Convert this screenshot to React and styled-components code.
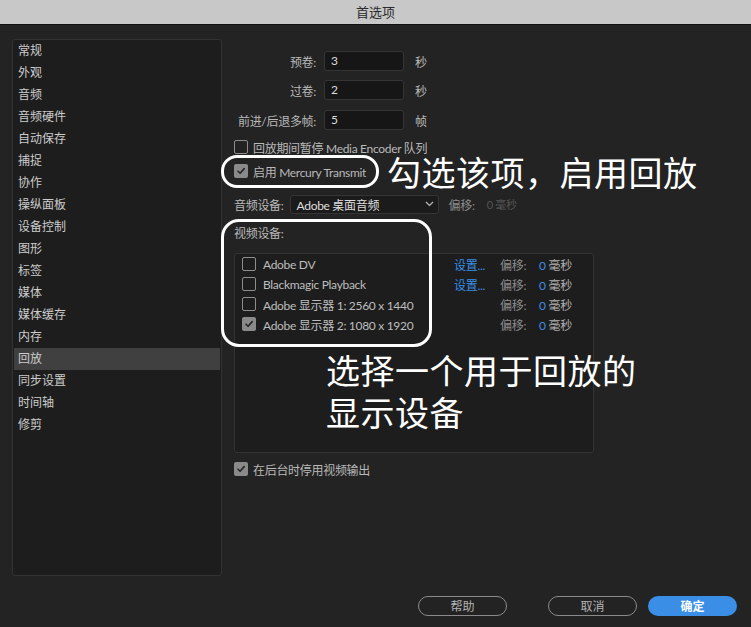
import React from "react";
import styled, { createGlobalStyle } from "styled-components";

const Global = createGlobalStyle`
  html, body { margin: 0; padding: 0; background: #232323; }
  body { font-family: "Lato", "Noto Sans CJK SC", sans-serif; font-size: 12px; }
  * { box-sizing: border-box; }
`;

const Window = styled.div`
  position: relative;
  width: 751px;
  height: 627px;
  background: #232323;
  display: flex;
  flex-direction: column;
  overflow: hidden;
`;

const TitleBar = styled.div`
  height: 25px;
  flex: none;
  background: #c8c8c8;
  border-bottom: 1px solid #111;
  display: flex;
  align-items: center;
  justify-content: center;
  color: #2b2b2b;
  font-family: "Noto Sans CJK SC", sans-serif;
  font-size: 13px;
  padding-bottom: 2px;
`;

const Body = styled.div`
  display: flex;
  padding: 14px 0 0 12px;
  height: 550px;
  flex: none;
`;

const Sidebar = styled.div`
  width: 210px;
  height: 537px;
  background: #1d1d1d;
  border: 1px solid #333;
  border-radius: 3px;
  padding: 0 1px;
`;

const NavItem = styled.div`
  height: 22px;
  line-height: 22px;
  padding-left: 4px;
  color: #cccccc;
  font-size: 12px;
  background: ${(p) => (p.$active ? "#404040" : "transparent")};
`;

const Content = styled.div`
  margin-left: 12px;
  padding-top: 12px;
  display: flex;
  flex-direction: column;
  width: 370px;
  letter-spacing: -0.3px;
`;

const FormRow = styled.div`
  display: flex;
  align-items: center;
  height: 20px;
  margin-top: ${(p) => p.$mt || 0}px;
`;

const Label = styled.div`
  width: 82px;
  text-align: right;
  color: #b9b9b9;
  margin-right: 8px;
  white-space: nowrap;
`;

const Input = styled.div`
  width: 80px;
  height: 20px;
  background: #161616;
  border: 1px solid #353535;
  border-radius: 3px;
  color: #dcdcdc;
  padding-left: 6px;
  line-height: 18px;
`;

const Unit = styled.div`
  margin-left: 11px;
  color: #b9b9b9;
`;

const CheckRow = styled.label`
  display: flex;
  align-items: center;
  height: 20px;
  margin-top: ${(p) => p.$mt || 0}px;
  color: #b9b9b9;
  white-space: nowrap;
`;

const Box = styled.span`
  width: 14px;
  height: 14px;
  flex: none;
  border-radius: 2px;
  border: ${(p) => (p.$on ? "none" : "1.5px solid #8d8d8d")};
  background: ${(p) => (p.$on ? "#8a8a8a" : "transparent")};
  margin-right: ${(p) => p.$gap || 5}px;
  display: flex;
  align-items: center;
  justify-content: center;
`;

const Check = ({ on, gap }) => (
  <Box $on={on} $gap={gap}>
    {on && (
      <svg width="10" height="10" viewBox="0 0 10 10">
        <path d="M2 5.2 L4.1 7.3 L8.2 2.6" fill="none" stroke="#262626" strokeWidth="1.6" strokeLinecap="round" strokeLinejoin="round" />
      </svg>
    )}
  </Box>
);

const AudioRow = styled.div`
  display: flex;
  align-items: center;
  height: 20px;
  margin-top: 13px;
`;

const Select = styled.div`
  width: 149px;
  height: 19px;
  margin-left: 6px;
  background: #1b1b1b;
  border: 1px solid #353535;
  border-radius: 3px;
  display: flex;
  align-items: center;
  justify-content: space-between;
  padding: 0 4px 0 6px;
  color: #dedede;
`;

const Dim = styled.span`
  color: ${(p) => p.$c || "#8c8c8c"};
  margin-left: ${(p) => p.$ml || 0}px;
  font-size: ${(p) => p.$fs || 12}px;
`;

const SectionLabel = styled.div`
  margin-top: 10px;
  height: 20px;
  line-height: 20px;
  color: #b9b9b9;
`;

const DeviceList = styled.div`
  margin-top: 9px;
  width: 360px;
  height: 200px;
  background: #1d1d1d;
  border: 1px solid #333;
  border-radius: 3px;
  padding: 0 0 0 7px;
`;

const DeviceRow = styled.div`
  display: grid;
  grid-template-columns: 212px 46px 39px auto;
  align-items: center;
  height: 20px;
  color: #bdbdbd;
  white-space: nowrap;
`;

const DeviceName = styled.div`
  display: flex;
  align-items: center;
`;

const Link = styled.span`
  color: #3a8ee6;
`;

const Footer = styled.div`
  display: flex;
  justify-content: flex-end;
  align-items: center;
  padding: 21px 14px 0 0;
`;

const Button = styled.button`
  width: 89px;
  height: 20px;
  border-radius: 10px;
  font-family: "Noto Sans CJK SC", sans-serif;
  font-size: 12px;
  padding: 0;
  line-height: 16px;
  margin-left: ${(p) => p.$ml || 0}px;
  border: ${(p) => (p.$primary ? "none" : "1.5px solid #8a8a8a")};
  background: ${(p) => (p.$primary ? "#3a8ee6" : "transparent")};
  color: ${(p) => (p.$primary ? "#ffffff" : "#b4b4b4")};
  font-weight: ${(p) => (p.$primary ? 700 : 400)};
`;

const Ring = styled.div`
  position: absolute;
  border: 3px solid #ffffff;
  border-radius: ${(p) => p.$r}px;
  pointer-events: none;
`;

const Note = styled.div`
  position: absolute;
  color: #ffffff;
  font-family: "Noto Sans CJK SC", sans-serif;
  font-size: 34px;
  line-height: 30px;
  white-space: nowrap;
  letter-spacing: 0.5px;
`;

const nav = ["常规","外观","音频","音频硬件","自动保存","捕捉","协作","操纵面板","设备控制","图形","标签","媒体","媒体缓存","内存","回放","同步设置","时间轴","修剪"];

const devices = [
  { name: "Adobe DV", on: false, setup: true },
  { name: "Blackmagic Playback", on: false, setup: true },
  { name: "Adobe 显示器 1: 2560 x 1440", on: false, setup: false },
  { name: "Adobe 显示器 2: 1080 x 1920", on: true, setup: false },
];

export default function App() {
  return (
    <Window>
      <Global />
      <TitleBar>首选项</TitleBar>
      <Body>
        <Sidebar>
          {nav.map((n) => (
            <NavItem key={n} $active={n === "回放"}>{n}</NavItem>
          ))}
        </Sidebar>
        <Content>
          <FormRow>
            <Label>预卷:</Label>
            <Input>3</Input>
            <Unit>秒</Unit>
          </FormRow>
          <FormRow $mt={9}>
            <Label>过卷:</Label>
            <Input>2</Input>
            <Unit>秒</Unit>
          </FormRow>
          <FormRow $mt={10}>
            <Label>前进/后退多帧:</Label>
            <Input>5</Input>
            <Unit>帧</Unit>
          </FormRow>
          <CheckRow $mt={7}>
            <Check on={false} />
            回放期间暂停 Media Encoder 队列
          </CheckRow>
          <CheckRow $mt={4}>
            <Check on />
            启用 Mercury Transmit
          </CheckRow>
          <AudioRow>
            <Dim $c="#b9b9b9">音频设备:</Dim>
            <Select>
              <span>Adobe 桌面音频</span>
              <svg width="9" height="6" viewBox="0 0 9 6">
                <path d="M1 1 L4.5 4.5 L8 1" fill="none" stroke="#bbb" strokeWidth="1.2" />
              </svg>
            </Select>
            <Dim $ml={10}>偏移:</Dim>
            <Dim $ml={12} $c="#555555" $fs={11}>0 毫秒</Dim>
          </AudioRow>
          <SectionLabel>视频设备:</SectionLabel>
          <DeviceList>
            {devices.map((d) => (
              <DeviceRow key={d.name}>
                <DeviceName>
                  <Check on={d.on} gap={7} />
                  {d.name}
                </DeviceName>
                <span>{d.setup && <Link>设置...</Link>}</span>
                <Dim>偏移:</Dim>
                <span><Link>0</Link> <Dim $c="#b0b0b0">毫秒</Dim></span>
              </DeviceRow>
            ))}
          </DeviceList>
          <CheckRow $mt={6}>
            <Check on />
            在后台时停用视频输出
          </CheckRow>
        </Content>
      </Body>
      <Footer>
        <Button>帮助</Button>
        <Button $ml={41}>取消</Button>
        <Button $ml={11} $primary>确定</Button>
      </Footer>
      <Ring $r={16} style={{ left: 221, top: 155, width: 158, height: 33 }} />
      <Ring $r={18} style={{ left: 221, top: 219, width: 211, height: 128 }} />
      <Note style={{ left: 387, top: 157 }}>勾选该项，启用回放</Note>
      <Note style={{ left: 326, top: 355 }}>选择一个用于回放的</Note>
      <Note style={{ left: 326, top: 397 }}>显示设备</Note>
    </Window>
  );
}
